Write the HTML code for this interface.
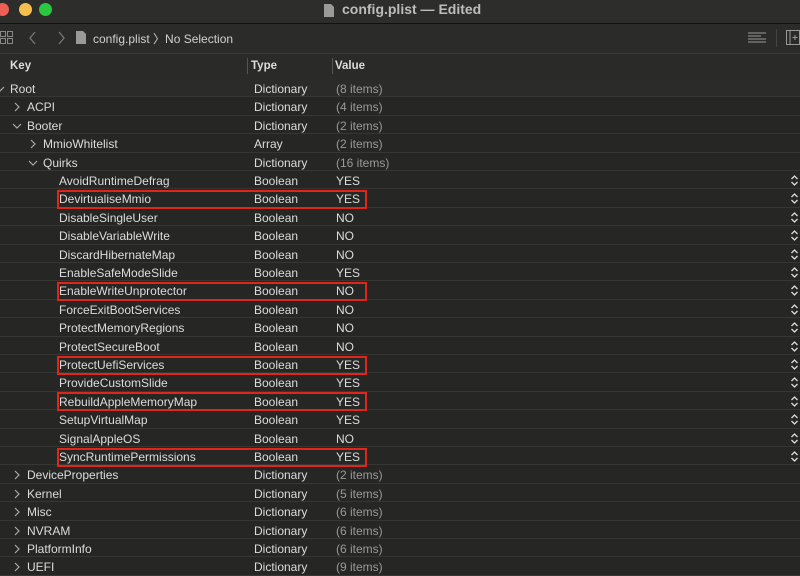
<!DOCTYPE html>
<html><head><style>
body{margin:0;width:800px;height:574px;overflow:hidden;background:#262725;font-family:"Liberation Sans",sans-serif;color:#dcdcdc;position:relative}
.tb{position:absolute;left:0;top:0;width:800px;height:23px;background:#2d2d2b;border-bottom:1px solid #111}
.tl{position:absolute;top:3px;width:13px;height:13px;border-radius:50%}
.tool{position:absolute;left:0;top:24px;width:800px;height:29px;background:#2b2c2a;border-bottom:1px solid #3a3a38}
.hdr{position:absolute;left:0;top:54px;width:800px;height:25px;background:#2a2b29;font-size:11.5px;font-weight:bold}
.row{position:absolute;left:0;width:800px;height:17.4px;border-bottom:1px solid #363735;font-size:12px;line-height:17px}
.row span{position:absolute;top:2px}
.row svg{position:absolute}
.box{position:absolute;left:57px;width:306px;height:15px;border:2px solid #e0261a}
</style></head><body>
<div class="tb">
<div class="tl" style="left:-4px;background:#ed5f57"></div>
<div class="tl" style="left:19px;background:#f4bf4f"></div>
<div class="tl" style="left:39px;background:#2ac840"></div>
<svg style="position:absolute;left:323px;top:3px" width="12" height="15"><path d="M1 1h7l3 3v10H1z" fill="#9a9a98"/></svg>
<div style="position:absolute;left:342px;top:1px;font-size:14px;font-weight:bold;color:#bdbdbb">config.plist — Edited</div>
</div>
<div class="tool">
<svg style="position:absolute;left:0;top:7px" width="14" height="14" fill="none" stroke="#888" stroke-width="1"><rect x="0.5" y="0.5" width="5" height="5"/><rect x="7.5" y="0.5" width="5" height="5"/><rect x="0.5" y="7.5" width="5" height="5"/><rect x="7.5" y="7.5" width="5" height="5"/></svg>
<svg style="position:absolute;left:28px;top:7px" width="40" height="14" fill="none" stroke="#777" stroke-width="1.3"><path d="M7 1L2 7l5 6M31 1l5 6-5 6"/></svg>
<svg style="position:absolute;left:75px;top:6px" width="12" height="15"><path d="M1 1h7l3 3v10H1z" fill="#9a9a98"/></svg>
<div style="position:absolute;left:93px;top:6px;font-size:12px;color:#d0d0d0">config.plist 〉No Selection</div>
<svg style="position:absolute;left:748px;top:7px" width="20" height="14" stroke="#999" stroke-width="1"><path d="M0 2h18M0 5h13M0 8h18M0 11h18"/></svg>
<div style="position:absolute;left:776px;top:5px;width:1px;height:18px;background:#444"></div>
<svg style="position:absolute;left:786px;top:6px" width="14" height="16" fill="none" stroke="#999"><rect x="0.5" y="0.5" width="13" height="14"/><path d="M4 0v15M9 5v5M6.5 7.5h5"/></svg>
</div>
<div class="hdr">
<span style="position:absolute;left:10px;top:6px">Key</span>
<div style="position:absolute;left:247px;top:4px;width:1px;height:16px;background:#555"></div>
<span style="position:absolute;left:251px;top:6px">Type</span>
<div style="position:absolute;left:332px;top:4px;width:1px;height:16px;background:#555"></div>
<span style="position:absolute;left:335px;top:6px">Value</span>
</div>
<div id="rows"></div>
<script>
var d=[
["d",0,"Root","Dictionary","(8 items)",0,0],
["r",1,"ACPI","Dictionary","(4 items)",0,0],
["d",1,"Booter","Dictionary","(2 items)",0,0],
["r",2,"MmioWhitelist","Array","(2 items)",0,0],
["d",2,"Quirks","Dictionary","(16 items)",0,0],
["",3,"AvoidRuntimeDefrag","Boolean","YES",1,0],
["",3,"DevirtualiseMmio","Boolean","YES",1,1],
["",3,"DisableSingleUser","Boolean","NO",1,0],
["",3,"DisableVariableWrite","Boolean","NO",1,0],
["",3,"DiscardHibernateMap","Boolean","NO",1,0],
["",3,"EnableSafeModeSlide","Boolean","YES",1,0],
["",3,"EnableWriteUnprotector","Boolean","NO",1,1],
["",3,"ForceExitBootServices","Boolean","NO",1,0],
["",3,"ProtectMemoryRegions","Boolean","NO",1,0],
["",3,"ProtectSecureBoot","Boolean","NO",1,0],
["",3,"ProtectUefiServices","Boolean","YES",1,1],
["",3,"ProvideCustomSlide","Boolean","YES",1,0],
["",3,"RebuildAppleMemoryMap","Boolean","YES",1,1],
["",3,"SetupVirtualMap","Boolean","YES",1,0],
["",3,"SignalAppleOS","Boolean","NO",1,0],
["",3,"SyncRuntimePermissions","Boolean","YES",1,1],
["r",1,"DeviceProperties","Dictionary","(2 items)",0,0],
["r",1,"Kernel","Dictionary","(5 items)",0,0],
["r",1,"Misc","Dictionary","(6 items)",0,0],
["r",1,"NVRAM","Dictionary","(6 items)",0,0],
["r",1,"PlatformInfo","Dictionary","(6 items)",0,0],
["r",1,"UEFI","Dictionary","(9 items)",0,0]];
var h="";
d.forEach(function(r,i){
var y=79+i*18.4,ind=[10,27,43,59][r[1]];
h+='<div class="row" style="top:'+y+'px'+(i==0?';background:#2b2c2a':'')+'">';
if(r[0]=="r")h+='<svg style="left:'+(ind-14)+'px;top:5px" width="8" height="10" fill="none" stroke="#aaa" stroke-width="1.2"><path d="M2 1l4 4-4 4"/></svg>';
if(r[0]=="d")h+='<svg style="left:'+(ind-15)+'px;top:6px" width="10" height="8" fill="none" stroke="#aaa" stroke-width="1.2"><path d="M1 2l4 4 4-4"/></svg>';
h+='<span style="left:'+ind+'px">'+r[2]+'</span><span style="left:254px">'+r[3]+'</span><span style="left:336px;'+(r[5]?'':'color:#9a9a98')+'">'+r[4]+'</span>';
if(r[5])h+='<svg style="left:790px;top:3px" width="9" height="13" fill="none" stroke="#ddd" stroke-width="1.3"><path d="M1.5 5l3-3 3 3M1.5 8l3 3 3-3"/></svg>';
h+='</div>';
if(r[6])h+='<div class="box" style="top:'+(y+0.5)+'px"></div>';
});
document.getElementById("rows").innerHTML=h;
</script>
</body></html>
